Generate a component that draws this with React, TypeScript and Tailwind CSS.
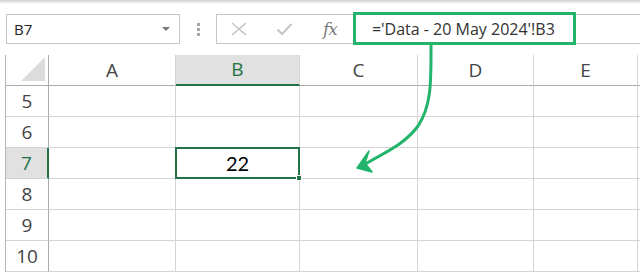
import React from "react";

const cols = [
  { label: "A", w: "w-[127px]" },
  { label: "B", w: "w-[124px]" },
  { label: "C", w: "w-[118px]" },
  { label: "D", w: "w-[116px]" },
  { label: "E", w: "w-[104px]" },
];
const rows = [5, 6, 7, 8, 9, 10];

export default function App() {
  return (
    <div className="relative w-[640px] h-[274px] overflow-hidden bg-white font-['Open_Sans',sans-serif]">
      <div className="h-[4px] bg-gradient-to-b from-[#cfcfcf] to-white" />

      {/* formula bar */}
      <div className="flex items-center h-[51px] pb-[11px] pt-[10px]">
        <div className="ml-[6px] w-[174px] h-[30px] border border-[#c6c6c6] flex items-center justify-between pl-[7px] pr-[9px]">
          <span className="text-[15px] text-[#222]">B7</span>
          <span className="w-0 h-0 border-l-[4px] border-r-[4px] border-t-[4px] border-l-transparent border-r-transparent border-t-[#777]" />
        </div>
        <div className="ml-[17px] flex flex-col gap-[2px]">
          <span className="w-[3px] h-[3px] bg-[#a6a6a6]" />
          <span className="w-[3px] h-[3px] bg-[#a6a6a6]" />
          <span className="w-[3px] h-[3px] bg-[#a6a6a6]" />
        </div>
        <div className="ml-[16px] flex-1 h-[30px] border-y border-l border-[#c6c6c6] flex items-center">
          <svg width="18" height="14" viewBox="0 0 18 14" className="ml-[13px]">
            <path d="M2 1 L16 13 M16 1 L2 13" stroke="#c4c4c4" strokeWidth="1.6" fill="none" />
          </svg>
          <svg width="17" height="14" viewBox="0 0 17 14" className="ml-[28px]">
            <path d="M1.5 7.5 L6 12 L15.5 2" stroke="#c4c4c4" strokeWidth="2" fill="none" />
          </svg>
          <span className="ml-[30px] font-['DejaVu_Serif',serif] italic text-[17px] text-[#7a7a7a] leading-none tracking-[-1px]">
            fx
          </span>
          <div className="ml-[16px] w-[223px] h-[33px] -mt-[1px] border-[3px] border-[#21b46a] flex items-center pl-[16px]">
            <span className="text-[16px] text-[#333] whitespace-nowrap">='Data - 20 May 2024'!B3</span>
          </div>
        </div>
      </div>

      {/* grid */}
      <div className="ml-[5px] border-l border-[#b5b5b5]">
        <div className="flex h-[31px]">
          <div className="w-[43px] border-r border-b border-[#ababab] relative">
            <svg width="24" height="24" className="absolute right-[3px] bottom-[4px]">
              <polygon points="24,0 24,24 0,24" fill="#dcdcdc" />
            </svg>
          </div>
          {cols.map((c) => {
            const sel = c.label === "B";
            return (
              <div
                key={c.label}
                className={`${c.w} flex items-center justify-center border-r border-[#d4d4d4] text-[19px] ${
                  sel
                    ? "bg-[#e1e1e1] text-[#217346] border-b-2 border-b-[#217346]"
                    : "text-[#444] border-b border-b-[#ababab]"
                }`}
              >
                {c.label}
              </div>
            );
          })}
          <div className="flex-1 border-b border-[#ababab]" />
        </div>
        {rows.map((r) => {
          const sel = r === 7;
          return (
            <div key={r} className="flex h-[31px]">
              <div
                className={`w-[43px] flex items-center justify-center text-[19px] border-b border-[#d4d4d4] ${
                  sel
                    ? "bg-[#e1e1e1] text-[#217346] border-r-2 border-r-[#217346]"
                    : "text-[#444] border-r border-r-[#ababab]"
                }`}
              >
                {r}
              </div>
              {cols.map((c) => {
                const active = sel && c.label === "B";
                return (
                  <div
                    key={c.label}
                    className={`${c.w} border-r border-b border-[#d4d4d4] ${active ? "relative" : ""}`}
                  >
                    {active && (
                      <div className="absolute -left-[1px] -top-[1px] -right-[1px] -bottom-[1px] border-2 border-[#217346] flex items-center justify-center font-['Lato',sans-serif] text-[20px] text-black">
                        22
                        <span className="absolute -right-[4px] -bottom-[4px] w-[6px] h-[6px] bg-[#217346] border border-white" />
                      </div>
                    )}
                  </div>
                );
              })}
              <div className="flex-1 border-b border-[#d4d4d4]" />
            </div>
          );
        })}
      </div>

      {/* annotation arrow */}
      <svg className="absolute left-0 top-0 pointer-events-none" width="640" height="274">
        <path
          d="M431 44 C431 80 432 105 418 126 C404 145 385 152 362 166"
          stroke="#21b46a"
          strokeWidth="3"
          fill="none"
          strokeLinecap="round"
        />
        <path d="M357 168 L369 151 L365 163 L372 172 Z" fill="#21b46a" stroke="#21b46a" strokeWidth="1.5" strokeLinejoin="round" />
      </svg>
    </div>
  );
}
